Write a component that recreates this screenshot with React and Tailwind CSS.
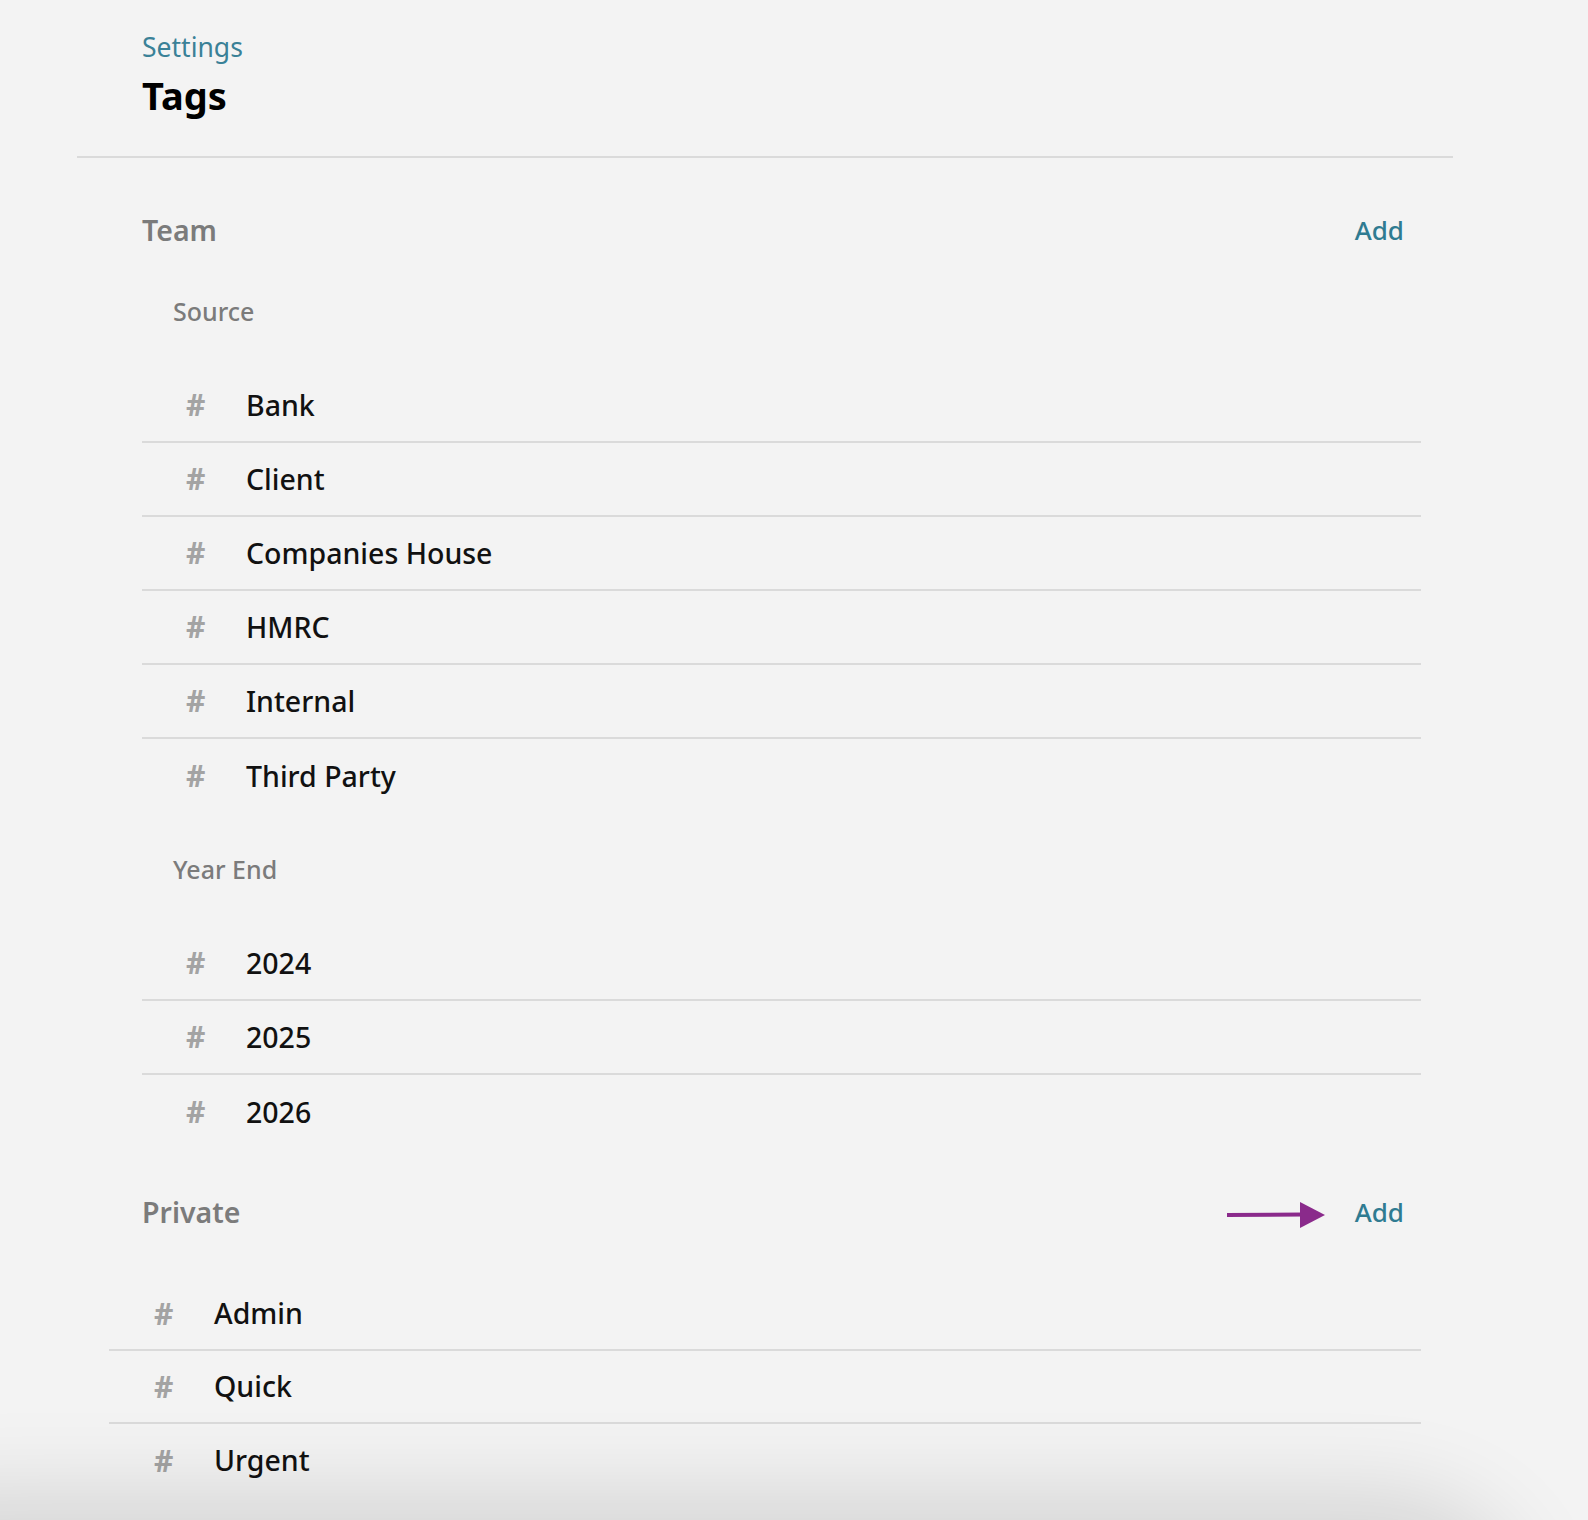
import React from "react";

// ─── Data ────────────────────────────────────────────────────────────────────
const TEAM_GROUPS = [
  { title: "Source", tags: ["Bank", "Client", "Companies House", "HMRC", "Internal", "Third Party"] },
  { title: "Year End", tags: ["2024", "2025", "2026"] },
];

const PRIVATE_TAGS = ["Admin", "Quick", "Urgent"];

const FONT = { fontFamily: '"Noto Sans", "Open Sans", Arial, sans-serif' };

// ─── Sub-components ──────────────────────────────────────────────────────────

function TagRow({ name, last, inset, height }) {
  return (
    <div
      className={`flex items-center ${height} ${inset} ${
        last ? "" : "border-b-2 border-[#dadada]"
      }`}
    >
      <span className="w-[60px] text-[30px] font-bold text-[#a3a3a3] leading-none">#</span>
      <span className="text-[28.5px] font-medium text-[#111] leading-none">{name}</span>
    </div>
  );
}

function SectionHeader({ title, arrow }) {
  return (
    <div className="flex items-center justify-between h-[48px] pl-[33px] pr-[17px]">
      <span className="text-[28.5px] font-semibold text-[#7b7b7b]">{title}</span>
      <div className="flex items-center gap-[30px]">
        {arrow && (
          <svg width="98" height="26" viewBox="0 0 98 26" className="mt-[6px]">
            <line x1="0" y1="13" x2="76" y2="12.5" stroke="#8a2a8b" strokeWidth="4" />
            <polygon points="73,0 98,13 73,26" fill="#8a2a8b" />
          </svg>
        )}
        <button className="text-[26px] font-medium text-[#2f7b91]">Add</button>
      </div>
    </div>
  );
}

// ─── Main component ───────────────────────────────────────────────────────────
export default function App() {
  return (
    <div className="relative min-h-[1520px] bg-[#f3f3f3] overflow-hidden" style={FONT}>
      {/* ── Header ── */}
      <div className="ml-[77px] w-[1376px] pl-[65px] pt-[30px] pb-[37px] border-b-2 border-[#dadada]">
        <div className="h-[34px] leading-[34px] text-[26.5px] text-[#3a8197]">Settings</div>
        <h1 className="mt-[7px] h-[48px] leading-[48px] text-[38px] font-bold text-black">Tags</h1>
      </div>

      <div className="ml-[109px] w-[1312px]">
        {/* ── Team ── */}
        <div className="mt-[48px]">
          <SectionHeader title="Team" />
          <div className="pl-[33px]">
            {TEAM_GROUPS.map((g, gi) => (
              <div key={g.title} className={gi === 0 ? "mt-[37px]" : "mt-[36px]"}>
                <div className="h-[40px] leading-[40px] pl-[31px] text-[25px] font-medium text-[#7b7b7b]">
                  {g.title}
                </div>
                <div className="mt-[38px]">
                  {g.tags.map((t, i) => (
                    <TagRow
                      key={t}
                      name={t}
                      last={i === g.tags.length - 1}
                      inset="pl-[44px]"
                      height="h-[74px]"
                    />
                  ))}
                </div>
              </div>
            ))}
          </div>
        </div>

        {/* ── Private ── */}
        <div className="mt-[39px]">
          <SectionHeader title="Private" arrow />
          <div className="mt-[42px]">
            {PRIVATE_TAGS.map((t, i) => (
              <TagRow
                key={t}
                name={t}
                last={i === PRIVATE_TAGS.length - 1}
                inset="pl-[45px]"
                height="h-[73px]"
              />
            ))}
          </div>
        </div>
      </div>

      {/* window shadow along the bottom edge */}
      <div className="pointer-events-none absolute left-[-120px] right-[110px] top-[1545px] h-[200px] rounded-[90px] bg-[#d2d2d2] shadow-[0_0_90px_50px_rgba(0,0,0,0.13)]" />
    </div>
  );
}
